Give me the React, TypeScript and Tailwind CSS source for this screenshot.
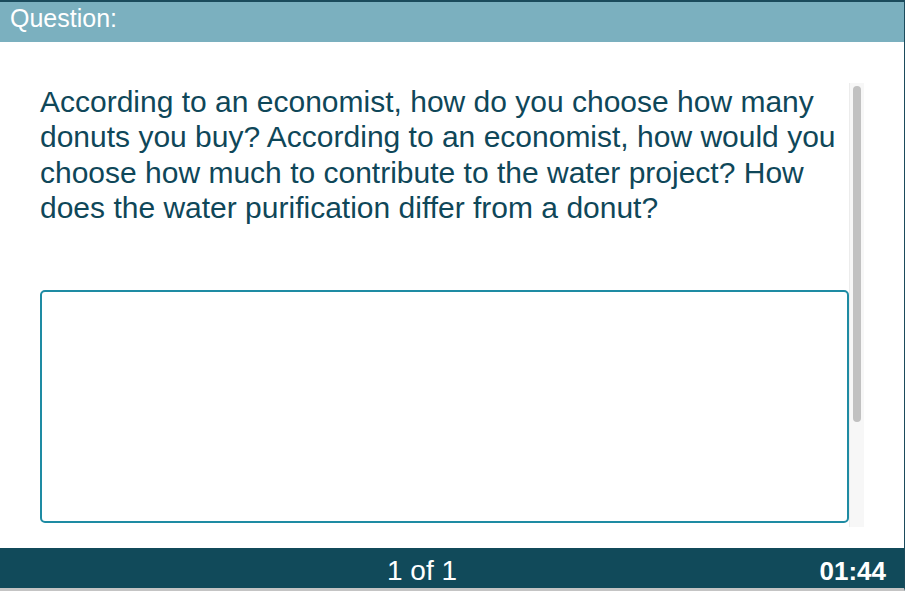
export default function App() {
  return (
    <div className="w-[905px] h-[591px] flex flex-col bg-white border-t-2 border-t-[#1b4b5c] border-r border-r-[#1b4b5c] border-b-[3px] border-b-[#c4c4c4] font-['Liberation_Sans',Arial,sans-serif] overflow-hidden">
      <div className="h-[40px] shrink-0 bg-[#7bb0bf] px-[10px] pt-[4px] text-white text-[25px] leading-[25px]">
        Question:
      </div>

      <div className="flex-1 flex pt-[41px] pb-[21px] pl-[40px] pr-[40px]">
        <div className="flex-1 pt-[1px] flex flex-col">
          <p className="text-[30px] leading-[35.33px] text-[#0f4759]">
            According to an economist, how do you choose how many donuts you buy? According to an economist, how would you
            choose how much to contribute to the water project? How does the water purification differ from a donut?
          </p>
          <textarea className="mt-[65px] h-[233px] w-full block resize-none rounded-[5px] border-2 border-[#1e8ba3] outline-none" />
        </div>
        <div className="w-[15px] shrink-0 bg-[#f7f7f7] border-l border-[#ececec] flex justify-center">
          <div className="mt-[3px] h-[336px] w-[8px] rounded-full bg-[#c1c1c1]" />
        </div>
      </div>

      <div className="h-[40px] shrink-0 bg-[#114a5a] flex items-center pt-[5px] text-white">
        <span className="ml-[387px] text-[28px] leading-none">1 of 1</span>
        <span className="ml-auto mr-[18px] text-[26px] font-bold leading-none">01:44</span>
      </div>
    </div>
  );
}
